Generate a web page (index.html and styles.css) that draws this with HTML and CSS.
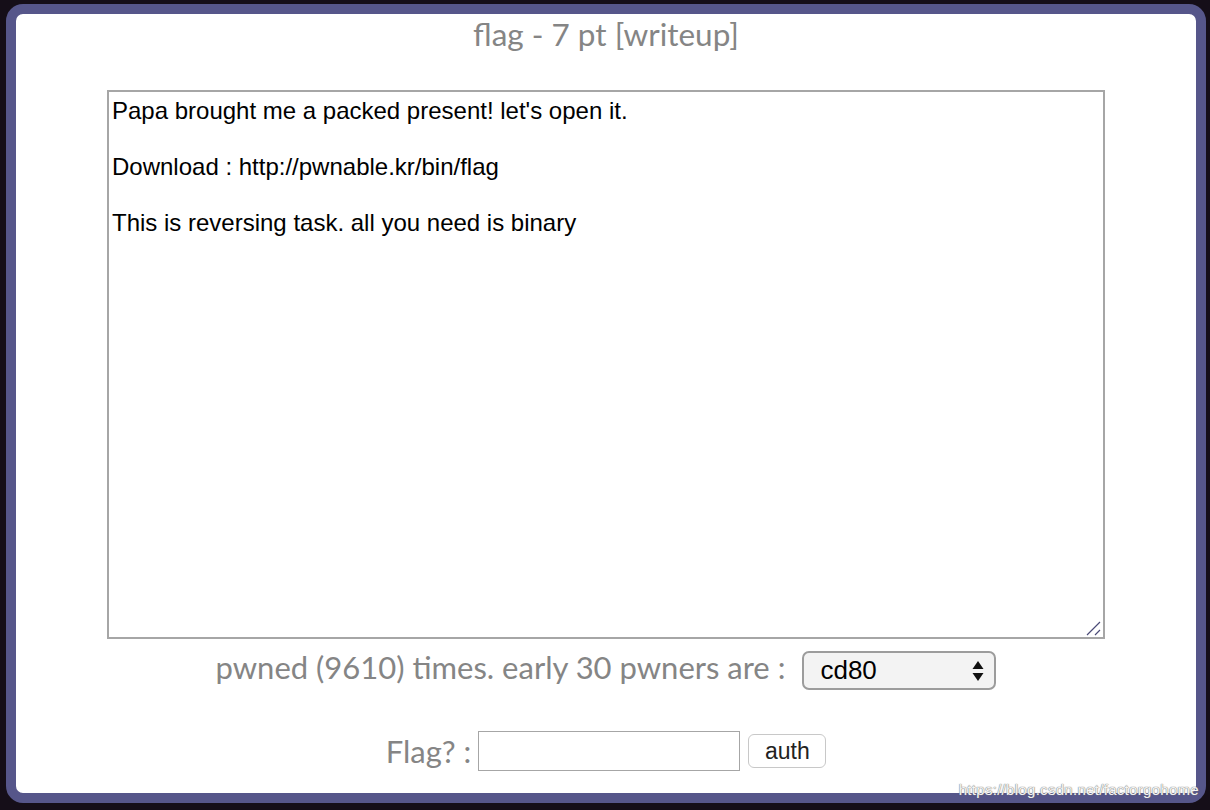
FILE: index.html
```html
<!DOCTYPE html>
<html>
<head>
<meta charset="utf-8">
<title>flag - 7 pt</title>
<link rel="stylesheet" href="styles.css">
</head>
<body>
<div class="frame">
  <h1 class="title">flag - 7 pt [writeup]</h1>
  <div class="desc">
    <p>Papa brought me a packed present! let's open it.</p>
    <p>Download : http://pwnable.kr/bin/flag</p>
    <p>This is reversing task. all you need is binary</p>
    <svg class="grip" width="16" height="16" viewBox="0 0 16 16"><path d="M1 15 L14 2 M9 15 L14 10" stroke="#4b4b78" stroke-width="1.2" fill="none"/></svg>
  </div>
  <div class="pwned">
    <span class="label">pwned (9610) times. early 30 pwners are :</span>
    <div class="select">
      <span class="opt">cd80</span>
      <svg class="arrows" width="12" height="26" viewBox="0 0 12 26"><path d="M6 3 L11.5 11 L0.5 11 Z M0.5 15 L11.5 15 L6 23 Z" fill="#111"/></svg>
    </div>
  </div>
  <div class="flagrow">
    <span class="label">Flag? :</span>
    <div class="input"></div>
    <div class="btn">auth</div>
  </div>
</div>
<div class="watermark">https://blog.csdn.net/factorgohome</div>
</body>
</html>
```
FILE: styles.css
```css
html, body {
  margin: 0;
  padding: 0;
}
body {
  width: 1210px;
  height: 810px;
  overflow: hidden;
  background: #150e18;
  position: relative;
}
.frame {
  box-sizing: border-box;
  width: 1200px;
  height: 799px;
  margin: 4px 0 0 6px;
  border: 10px solid #56568a;
  border-radius: 17px;
  background: #fff;
  display: flex;
  flex-direction: column;
  align-items: center;
}
.title {
  margin: 0;
  font-family: Lato, "Open Sans", sans-serif;
  font-weight: normal;
  font-size: 31.5px;
  color: #858585;
  line-height: 40px;
}
.desc {
  box-sizing: border-box;
  position: relative;
  width: 998px;
  height: 549px;
  margin-top: 36px;
  border: 2px solid #a6a6a6;
  padding: 5px 3px 3px;
  font-family: "Liberation Sans", Arial, sans-serif;
  font-size: 24px;
  line-height: 28px;
  color: #000;
}
.desc p {
  margin: 0 0 28px;
}
.grip {
  position: absolute;
  right: 1px;
  bottom: 1px;
}
.label {
  font-family: Lato, "Open Sans", sans-serif;
  font-size: 31px;
  color: #858585;
}
.pwned {
  display: flex;
  align-items: center;
  gap: 17px;
  margin-top: 12px;
  height: 39px;
}
.pwned .label {
  margin-bottom: 8px;
}
.select {
  box-sizing: border-box;
  width: 194px;
  height: 39px;
  border: 2px solid #9c9c9c;
  border-radius: 7px;
  background: #f3f3f3;
  display: flex;
  align-items: center;
  justify-content: space-between;
  padding: 0 10px 0 16px;
  font-family: "Liberation Sans", Arial, sans-serif;
  font-size: 26px;
  color: #000;
}
.flagrow {
  display: flex;
  align-items: center;
  gap: 7px;
  margin-top: 41px;
  height: 40px;
}
.input {
  box-sizing: border-box;
  width: 262px;
  height: 40px;
  border: 1px solid #a6a6a6;
  background: #fff;
}
.btn {
  box-sizing: border-box;
  width: 78px;
  height: 34px;
  margin-left: 1px;
  border: 1px solid #c8c8c8;
  border-radius: 6px;
  background: #fff;
  display: flex;
  align-items: center;
  justify-content: center;
  font-family: "Liberation Sans", Arial, sans-serif;
  font-size: 23px;
  color: #222;
}
.watermark {
  position: absolute;
  right: 11px;
  bottom: 12px;
  font-family: "Liberation Sans", Arial, sans-serif;
  font-size: 15px;
  color: #f4f4f4;
  text-shadow: 0 0 1px #777, 0 0 1px #777;
  letter-spacing: 0.3px;
}
```
